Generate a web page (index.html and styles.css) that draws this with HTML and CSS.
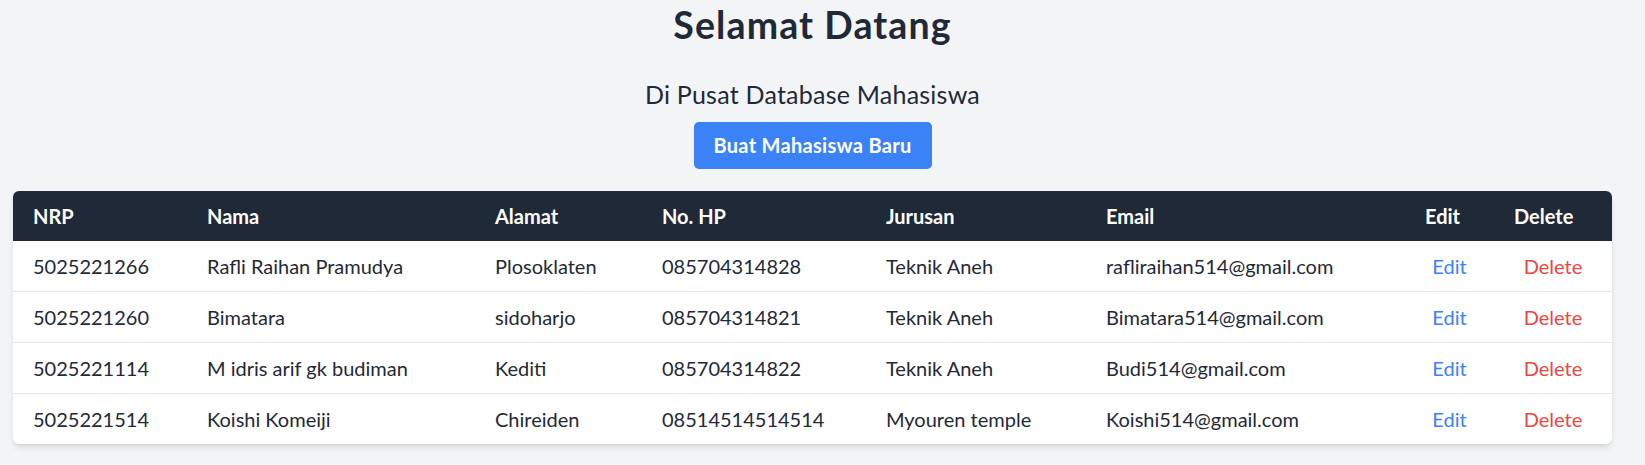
FILE: index.html
```html
<!DOCTYPE html>
<html lang="id">
<head>
<meta charset="utf-8">
<title>Pusat Database Mahasiswa</title>
<link rel="stylesheet" href="styles.css">
</head>
<body>
<div class="page">
  <h1 class="title">Selamat Datang</h1>
  <h2 class="subtitle">Di Pusat Database Mahasiswa</h2>
  <div class="actions"><a class="btn" href="#">Buat Mahasiswa Baru</a></div>
  <div class="card">
    <table class="tbl">
      <thead>
        <tr>
          <th class="c-nrp">NRP</th>
          <th class="c-nama">Nama</th>
          <th class="c-alamat">Alamat</th>
          <th class="c-hp">No. HP</th>
          <th class="c-jur">Jurusan</th>
          <th class="c-email">Email</th>
          <th class="c-edit">Edit</th>
          <th class="c-del">Delete</th>
        </tr>
      </thead>
      <tbody>
        <tr>
          <td>5025221266</td><td>Rafli Raihan Pramudya</td><td>Plosoklaten</td><td>085704314828</td><td>Teknik Aneh</td><td>rafliraihan514@gmail.com</td>
          <td class="act"><a class="edit" href="#">Edit</a></td><td class="act"><a class="del" href="#">Delete</a></td>
        </tr>
        <tr>
          <td>5025221260</td><td>Bimatara</td><td>sidoharjo</td><td>085704314821</td><td>Teknik Aneh</td><td>Bimatara514@gmail.com</td>
          <td class="act"><a class="edit" href="#">Edit</a></td><td class="act"><a class="del" href="#">Delete</a></td>
        </tr>
        <tr>
          <td>5025221114</td><td>M idris arif gk budiman</td><td>Kediti</td><td>085704314822</td><td>Teknik Aneh</td><td>Budi514@gmail.com</td>
          <td class="act"><a class="edit" href="#">Edit</a></td><td class="act"><a class="del" href="#">Delete</a></td>
        </tr>
        <tr>
          <td>5025221514</td><td>Koishi Komeiji</td><td>Chireiden</td><td>08514514514514</td><td>Myouren temple</td><td>Koishi514@gmail.com</td>
          <td class="act"><a class="edit" href="#">Edit</a></td><td class="act"><a class="del" href="#">Delete</a></td>
        </tr>
      </tbody>
    </table>
  </div>
</div>
</body>
</html>
```
FILE: styles.css
```css
* { box-sizing: border-box; }
html, body {
  margin: 0;
  padding: 0;
  background: #f3f4f6;
}
body {
  font-family: Lato, "Noto Sans", sans-serif;
  color: #1f2937;
}
.page {
  padding: 2px 33px 20px 13px;
  display: flex;
  flex-direction: column;
  align-items: center;
}
.title {
  margin: 0;
  font-size: 37.5px;
  line-height: 45px;
  font-weight: 700;
  letter-spacing: 1.1px;
}
.subtitle {
  margin: 30px 0 0;
  font-size: 25px;
  line-height: 35px;
  font-weight: 400;
  letter-spacing: 0.23px;
}
.actions {
  margin-top: 10px;
}
.btn {
  display: inline-block;
  background: #3b82f6;
  color: #fff;
  text-decoration: none;
  font-weight: 700;
  font-size: 20px;
  line-height: 27px;
  padding: 10px 20px;
  border-radius: 5px;
  letter-spacing: 0.3px;
}
.card {
  margin-top: 22px;
  align-self: stretch;
  background: #fff;
  border-radius: 6px;
  overflow: hidden;
  box-shadow: 0 4px 6px -1px rgba(0,0,0,.1), 0 2px 4px -2px rgba(0,0,0,.1);
}
.tbl {
  width: 100%;
  border-collapse: collapse;
  table-layout: fixed;
  font-size: 20px;
  line-height: 30px;
}
.tbl th {
  background: #1f2937;
  color: #fff;
  text-align: left;
  font-weight: 700;
  padding: 10px 20px;
}
.tbl td {
  padding: 10px 20px;
  white-space: nowrap;
}
.tbl tbody tr + tr td {
  border-top: 1px solid #e5e7eb;
}
.c-nrp { width: 174px; }
.c-nama { width: 288px; }
.c-alamat { width: 167px; }
.c-hp { width: 224px; }
.c-jur { width: 220px; }
.c-email { width: 319px; }
.c-edit { width: 89px; }
.c-del { width: 118px; }
.tbl td.act { text-align: center; }
.edit, .del { text-decoration: none; }
.edit { color: #3b82f6; }
.del { color: #ef4444; }
```
